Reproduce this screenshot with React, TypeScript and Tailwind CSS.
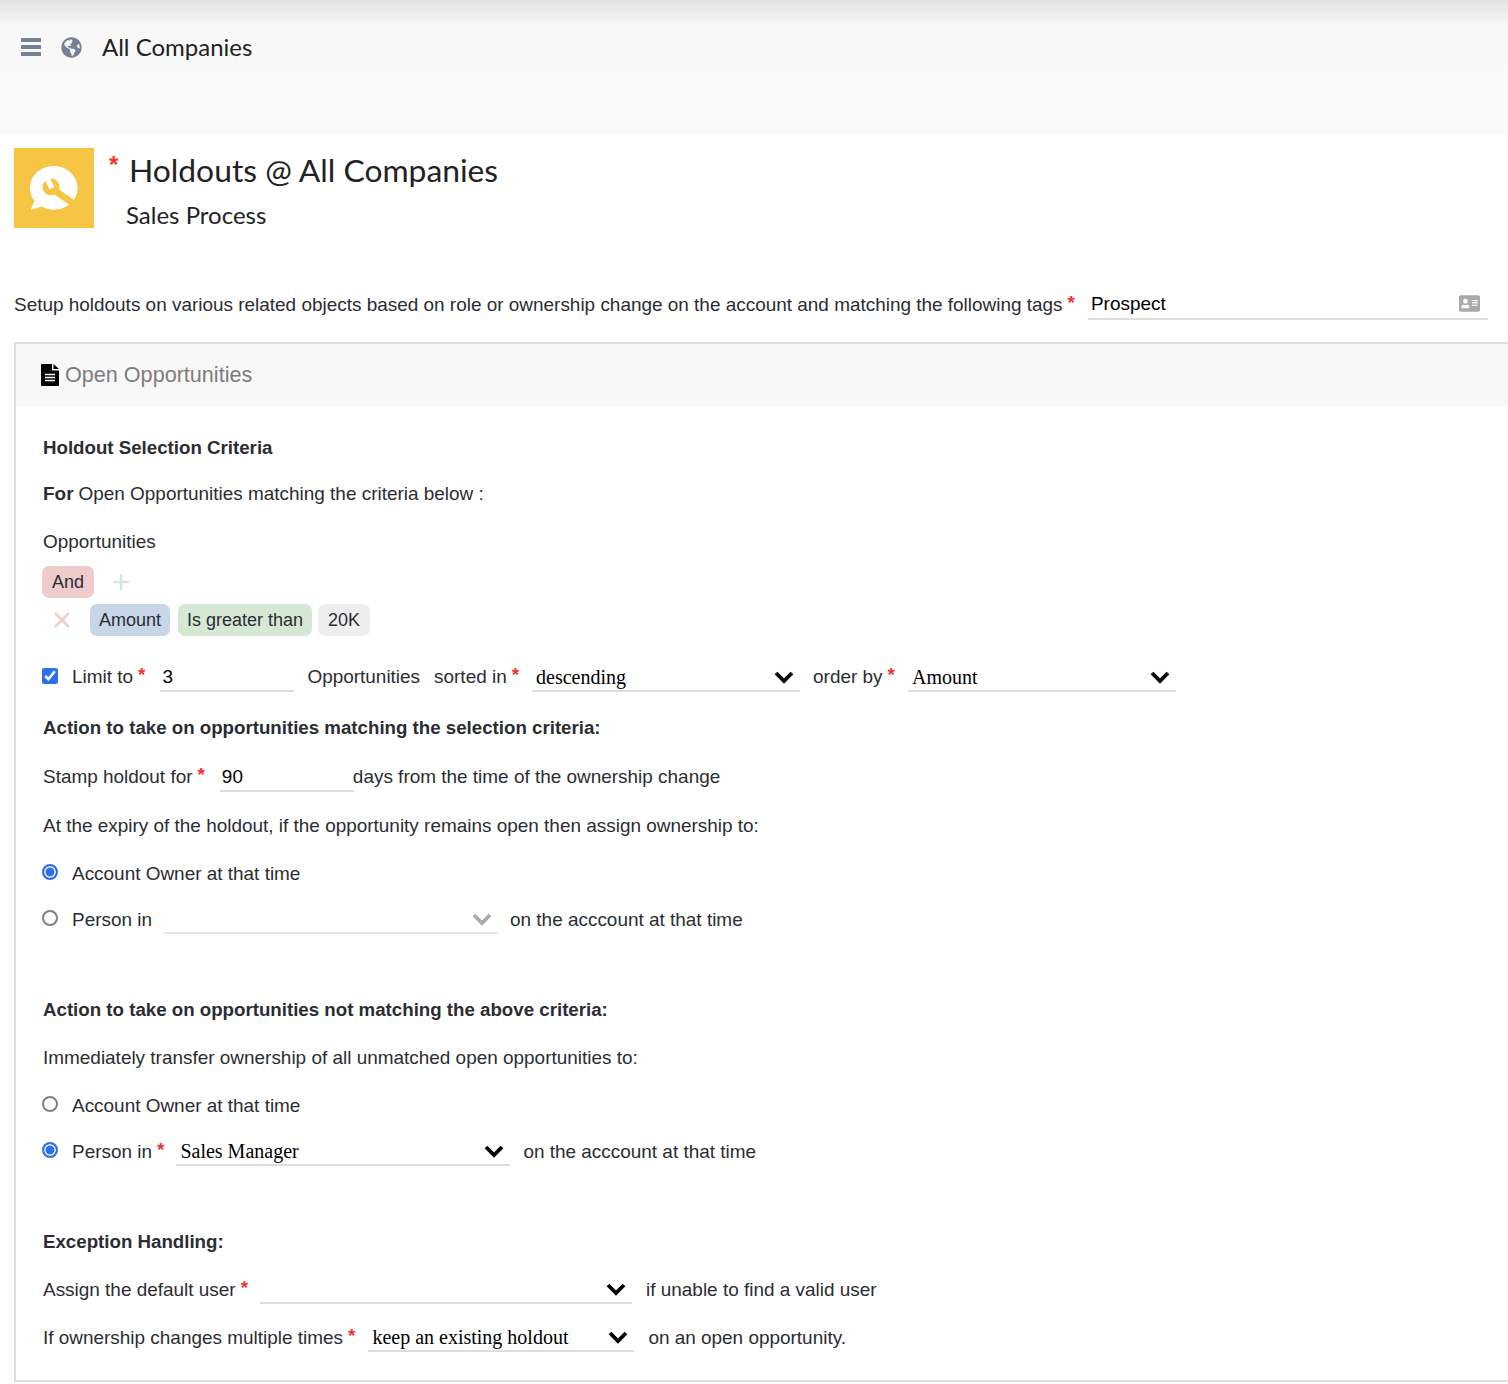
import React from 'react';
import { FaAddressCard, FaGlobeAmericas } from 'react-icons/fa';
import { Plus, X } from 'lucide-react';

const Req = () => <span className="text-[#f0352b] ml-[5px] font-bold relative -top-[2px]">*</span>;

function Field({ width, value, className = '' }: { width: string; value: string; className?: string }) {
  return (
    <div className={`${width} h-[28px] border-b-2 border-[#dddddd] pl-[2px] text-black leading-[26px] ${className}`}>
      {value}
    </div>
  );
}

function Chevron({ muted }: { muted?: boolean }) {
  return (
    <svg viewBox="0 0 20 14" className={`w-[20px] h-[14px] ${muted ? 'text-[#aaaaaa]' : 'text-black'}`}>
      <path d="M2 3l8 8 8-8" fill="none" stroke="currentColor" strokeWidth="3.8" />
    </svg>
  );
}

function Dropdown({ width, value, muted, className = '' }: { width: string; value?: string; muted?: boolean; className?: string }) {
  return (
    <div className={`${width} h-[28px] border-b-2 flex items-center justify-between pl-[4px] pr-[6px] font-['Liberation_Serif',serif] text-[20px] text-black ${muted ? 'border-[#e6e6e6]' : 'border-[#dddddd]'} ${className}`}>
      <span>{value}</span>
      <Chevron muted={muted} />
    </div>
  );
}

function Radio({ checked, label, name }: { checked?: boolean; label: string; name: string }) {
  return (
    <label className="flex items-center -ml-[1px]">
      <input
        type="radio"
        name={name}
        defaultChecked={checked}
        className="appearance-none size-[16px] m-0 mb-[4px] rounded-full border-2 border-[#808080] bg-white checked:border-[#2f6fed] checked:bg-[#2f6fed] checked:shadow-[inset_0_0_0_1.5px_white]"
      />
      <span className="ml-[14px]">{label}</span>
    </label>
  );
}

function Pill({ color, children, className = '' }: { color: string; children: React.ReactNode; className?: string }) {
  return <div className={`${color} h-[32px] rounded-[7px] flex items-center justify-center text-[18px] ${className}`}>{children}</div>;
}

export default function App() {
  return (
    <div className="w-[1508px] h-[1384px] overflow-hidden bg-white font-['Liberation_Sans',sans-serif] text-[18.95px] text-[#2b2d33]">
      {/* Top bar */}
      <div className="h-[134px] bg-gradient-to-b from-[#e3e3e3] via-[#f8f8f8] via-[20%] to-[#fafafa] pt-[38px] pl-[21px] flex items-start">
        <svg viewBox="0 0 20 18" className="w-[20px] h-[18px] text-[#738297]">
          <rect y="0" width="20" height="4" rx="0.5" fill="currentColor" />
          <rect y="7" width="20" height="4" rx="0.5" fill="currentColor" />
          <rect y="14" width="20" height="4" rx="0.5" fill="currentColor" />
        </svg>
        <FaGlobeAmericas className="ml-[20px] -mt-[1px] w-[21px] h-[21px] text-[#738297]" />
        <span className="ml-[20px] -mt-[7px] font-['Lato',sans-serif] text-[24px] leading-[31px] text-[#222222]">All Companies</span>
      </div>

      {/* Title */}
      <div className="flex pl-[14px] pt-[14px] h-[155px]">
        <div className="w-[80px] h-[80px] bg-[#f6c544]">
          <svg viewBox="0 0 80 80" className="w-[80px] h-[80px]">
            <path d="M40 18c-13.5 0-24 9.500-24 22 0 5 1.600 9.500 4.500 13l-4 9 11-3.500c3.600 2 7.800 3.200 12.500 3.200 13 0 23.500-9.700 23.500-21.700S53 18 40 18z" fill="#fff" />
            <path d="M40 42l20 14" stroke="#f6c544" strokeWidth="6.500" fill="none" />
            <circle cx="37" cy="39" r="8.500" fill="#f6c544" />
            <path d="M38 40l-6-11" stroke="#fff" strokeWidth="5.500" fill="none" />
          </svg>
        </div>
        <div className="ml-[14px] font-['Lato',sans-serif] text-[#222222]">
          <div className="flex items-start h-[44px]">
            <span className="font-['Liberation_Sans',sans-serif] font-bold text-[#f0352b] text-[24px] leading-[34px] w-[21px] pl-[1px]">*</span>
            <span className="text-[31.8px] leading-[46px] -mt-[1px]">Holdouts @ All Companies</span>
          </div>
          <div className="ml-[18px] mt-[8px] text-[24px] leading-[30px]">Sales Process</div>
        </div>
      </div>

      {/* Tags line */}
      <div className="flex items-start pl-[14px] h-[36px]">
        <span className="leading-[30px] mt-[1px]">Setup holdouts on various related objects based on role or ownership change on the account and matching the following tags<Req /></span>
        <div className="ml-[13px] w-[400px] h-[31px] border-b-2 border-[#dddddd] flex items-center justify-between pl-[3px] pr-[8px] text-black">
          <span className="leading-[28px]">Prospect</span>
          <FaAddressCard className="w-[21px] h-[21px] text-[#aaaaaa]" />
        </div>
      </div>

      {/* Card */}
      <div className="ml-[14px] mt-[17px] h-[1040px] border-2 border-r-0 border-[#dddddd]">
        <div className="h-[62px] bg-[#f8f8f8] flex items-center pl-[25px]">
          <svg viewBox="0 0 18 22" className="w-[18px] h-[22px] text-black">
            <path d="M0 1a1 1 0 0 1 1-1h10v6.500h7V21a1 1 0 0 1-1 1H1a1 1 0 0 1-1-1z" fill="currentColor" />
            <path d="M12.500 0L18 5h-5.500z" fill="currentColor" />
            <path d="M4 10.500h10M4 13.500h10M4 16.500h10" stroke="#fff" strokeWidth="1.500" />
          </svg>
          <span className="ml-[6px] text-[21.6px] text-[#7d7d7d]">Open Opportunities</span>
        </div>
        <div className="pl-[27px] pt-[30px]">
          <div className="h-[24px] flex items-center font-bold text-[18.7px]">Holdout Selection Criteria</div>
          <div className="h-[24px] mt-[22px] flex items-center"><b className="mr-[5px]">For</b>Open Opportunities matching the criteria below :</div>
          <div className="h-[24px] mt-[24px] flex items-center">Opportunities</div>

          <div className="flex items-center mt-[12px] h-[32px] -ml-[1px]">
            <Pill color="bg-[#eecccc]" className="w-[52px]">And</Pill>
            <Plus className="ml-[15px] w-[24px] h-[24px] text-[#d5e8d4]" strokeWidth={2.4} />
          </div>
          <div className="flex items-center mt-[6px] h-[32px] -ml-[1px]">
            <X className="ml-[8px] w-[24px] h-[24px] text-[#f0cccc]" strokeWidth={2.6} />
            <Pill color="bg-[#c6d6e8]" className="ml-[16px] w-[80px]">Amount</Pill>
            <Pill color="bg-[#d5e8d4]" className="ml-[8px] w-[134px]">Is greater than</Pill>
            <Pill color="bg-[#eeeeee]" className="ml-[6px] w-[52px]">20K</Pill>
          </div>

          <div className="flex items-center mt-[29px] h-[24px] -ml-[1px]">
            <input type="checkbox" defaultChecked className="size-[16px] m-0 mb-[2px] accent-[#2f6fed]" />
            <span className="ml-[14px]">Limit to<Req /></span>
            <Field width="w-[134px]" value="3" className="ml-[15px] mt-[2px]" />
            <span className="ml-[13px]">Opportunities</span>
            <span className="ml-[14px]">sorted in<Req /></span>
            <Dropdown width="w-[268px]" value="descending" className="ml-[13px] mt-[2px]" />
            <span className="ml-[13px]">order by<Req /></span>
            <Dropdown width="w-[268px]" value="Amount" className="ml-[13px] mt-[2px]" />
          </div>

          <div className="h-[24px] mt-[27px] flex items-center font-bold text-[18.7px]">Action to take on opportunities matching the selection criteria:</div>
          <div className="flex items-center mt-[25px] h-[24px]">
            <span>Stamp holdout for<Req /></span>
            <Field width="w-[134px]" value="90" className="ml-[15px] mt-[2px]" />
            <span className="-ml-[1px]">days from the time of the ownership change</span>
          </div>
          <div className="h-[24px] mt-[25px] flex items-center">At the expiry of the holdout, if the opportunity remains open then assign ownership to:</div>
          <div className="h-[24px] mt-[24px] flex items-center"><Radio name="expiry" checked label="Account Owner at that time" /></div>
          <div className="h-[24px] mt-[22px] flex items-center">
            <Radio name="expiry" label="Person in" />
            <Dropdown width="w-[334px]" muted className="ml-[12px]" />
            <span className="ml-[12px]">on the acccount at that time</span>
          </div>

          <div className="h-[24px] mt-[66px] flex items-center font-bold text-[18.7px]">Action to take on opportunities not matching the above criteria:</div>
          <div className="h-[24px] mt-[24px] flex items-center">Immediately transfer ownership of all unmatched open opportunities to:</div>
          <div className="h-[24px] mt-[24px] flex items-center"><Radio name="other" label="Account Owner at that time" /></div>
          <div className="h-[24px] mt-[22px] flex items-center">
            <Radio name="other" checked label="Person in" />
            <Req />
            <Dropdown width="w-[334px]" value="Sales Manager" className="ml-[12px]" />
            <span className="ml-[13px]">on the acccount at that time</span>
          </div>

          <div className="h-[24px] mt-[66px] flex items-center font-bold text-[18.7px]">Exception Handling:</div>
          <div className="h-[24px] mt-[24px] flex items-center">
            <span>Assign the default user<Req /></span>
            <Dropdown width="w-[372px]" className="ml-[12px]" />
            <span className="ml-[14px]">if unable to find a valid user</span>
          </div>
          <div className="h-[24px] mt-[24px] flex items-center">
            <span>If ownership changes multiple times<Req /></span>
            <Dropdown width="w-[266px]" value="keep an existing holdout" className="ml-[13px]" />
            <span className="ml-[14px]">on an open opportunity.</span>
          </div>
        </div>
      </div>
    </div>
  );
}
